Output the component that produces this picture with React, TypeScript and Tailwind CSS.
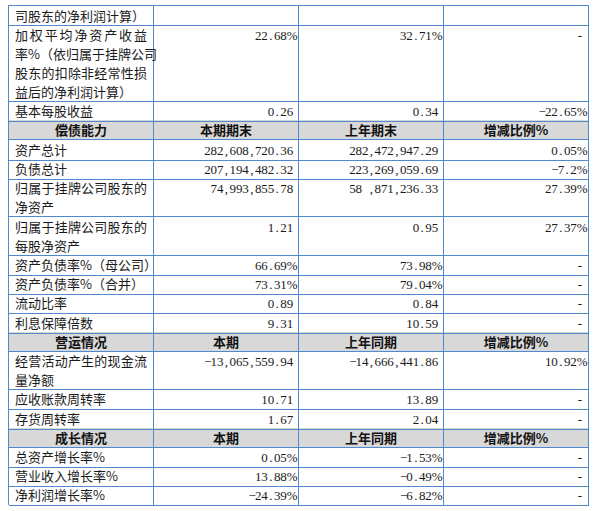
import React from "react";

type Line = { t: string; j?: boolean };
type Row =
  | { kind: "header"; h: number; cells: string[] }
  | { kind: "data"; h: number; label: Line[]; vals: string[] };

const H: Record<number, string> = {
  19: "h-[19px]",
  20: "h-[20px]",
  38: "h-[38px]",
  39: "h-[39px]",
  76: "h-[76px]",
};

const rows: Row[] = [
  { kind: "data", h: 19, label: [{ t: "司股东的净利润计算）" }], vals: ["", "", ""] },
  {
    kind: "data",
    h: 76,
    label: [
      { t: "加权平均净资产收益", j: true },
      { t: "率%（依归属于挂牌公司", j: true },
      { t: "股东的扣除非经常性损", j: true },
      { t: "益后的净利润计算）" },
    ],
    vals: ["22.68%", "32.71%", "-"],
  },
  { kind: "data", h: 19, label: [{ t: "基本每股收益" }], vals: ["0.26", "0.34", "−22.65%"] },
  { kind: "header", h: 20, cells: ["偿债能力", "本期期末", "上年期末", "增减比例%"] },
  { kind: "data", h: 19, label: [{ t: "资产总计" }], vals: ["282,608,720.36", "282,472,947.29", "0.05%"] },
  { kind: "data", h: 19, label: [{ t: "负债总计" }], vals: ["207,194,482.32", "223,269,059.69", "−7.2%"] },
  {
    kind: "data",
    h: 39,
    label: [{ t: "归属于挂牌公司股东的", j: true }, { t: "净资产" }],
    vals: ["74,993,855.78", "58 ,871,236.33", "27.39%"],
  },
  {
    kind: "data",
    h: 38,
    label: [{ t: "归属于挂牌公司股东的", j: true }, { t: "每股净资产" }],
    vals: ["1.21", "0.95", "27.37%"],
  },
  { kind: "data", h: 19, label: [{ t: "资产负债率%（母公司）" }], vals: ["66.69%", "73.98%", "-"] },
  { kind: "data", h: 19, label: [{ t: "资产负债率%（合并）" }], vals: ["73.31%", "79.04%", "-"] },
  { kind: "data", h: 20, label: [{ t: "流动比率" }], vals: ["0.89", "0.84", "-"] },
  { kind: "data", h: 19, label: [{ t: "利息保障倍数" }], vals: ["9.31", "10.59", "-"] },
  { kind: "header", h: 19, cells: ["营运情况", "本期", "上年同期", "增减比例%"] },
  {
    kind: "data",
    h: 38,
    label: [{ t: "经营活动产生的现金流", j: true }, { t: "量净额" }],
    vals: ["−13,065,559.94", "−14,666,441.86", "10.92%"],
  },
  { kind: "data", h: 20, label: [{ t: "应收账款周转率" }], vals: ["10.71", "13.89", "-"] },
  { kind: "data", h: 19, label: [{ t: "存货周转率" }], vals: ["1.67", "2.04", "-"] },
  { kind: "header", h: 19, cells: ["成长情况", "本期", "上年同期", "增减比例%"] },
  { kind: "data", h: 19, label: [{ t: "总资产增长率%" }], vals: ["0.05%", "−1.53%", "-"] },
  { kind: "data", h: 19, label: [{ t: "营业收入增长率%" }], vals: ["13.88%", "−0.49%", "-"] },
  { kind: "data", h: 20, label: [{ t: "净利润增长率%" }], vals: ["−24.39%", "−6.82%", "-"] },
];

const cjk = "font-['Noto_Sans_CJK_SC','Noto_Sans',sans-serif]";

function Num({ v }: { v: string }) {
  return (
    <span className="inline-flex font-['Liberation_Serif',serif] text-[13px]">
      {v.split("").map((c, i) => (
        <span key={i} className="inline-block w-[6.35px] text-center">
          {c === " " ? "\u00a0" : c}
        </span>
      ))}
    </span>
  );
}

const cell = "border-r border-b border-[#5089cd] overflow-visible";

export default function App() {
  return (
    <div className="w-[597px] h-[511px] bg-white pt-[5px] pl-[8px] text-[#1a1a1a]">
      <div className="w-[581px] border-t border-l border-[#5089cd]">
        {rows.map((r, i) =>
          r.kind === "header" ? (
            <div key={i} className={`grid grid-cols-[145px_145px_145px_145px] bg-[#d8d8d8] ${H[r.h]}`}>
              {r.cells.map((c, k) => (
                <div
                  key={k}
                  className={`${cell} ${cjk} text-[13px] font-bold leading-[19px] text-center text-[#111]`}
                >
                  {c}
                </div>
              ))}
            </div>
          ) : (
            <div key={i} className={`grid grid-cols-[145px_145px_145px_145px] ${H[r.h]}`}>
              <div className={`${cell} ${cjk} text-[13px] leading-[19px] pl-[6px] pr-[6px]`}>
                {r.label.map((l, k) => (
                  <div
                    key={k}
                    className={l.j ? "text-justify [text-align-last:justify] whitespace-nowrap" : "whitespace-nowrap"}
                  >
                    {l.t}
                  </div>
                ))}
              </div>
              {r.vals.map((v, k) => (
                <div key={k} className={`${cell} leading-[19px] text-right pr-[5px]`}>
                  {v ? <Num v={v} /> : null}
                </div>
              ))}
            </div>
          )
        )}
      </div>
    </div>
  );
}
